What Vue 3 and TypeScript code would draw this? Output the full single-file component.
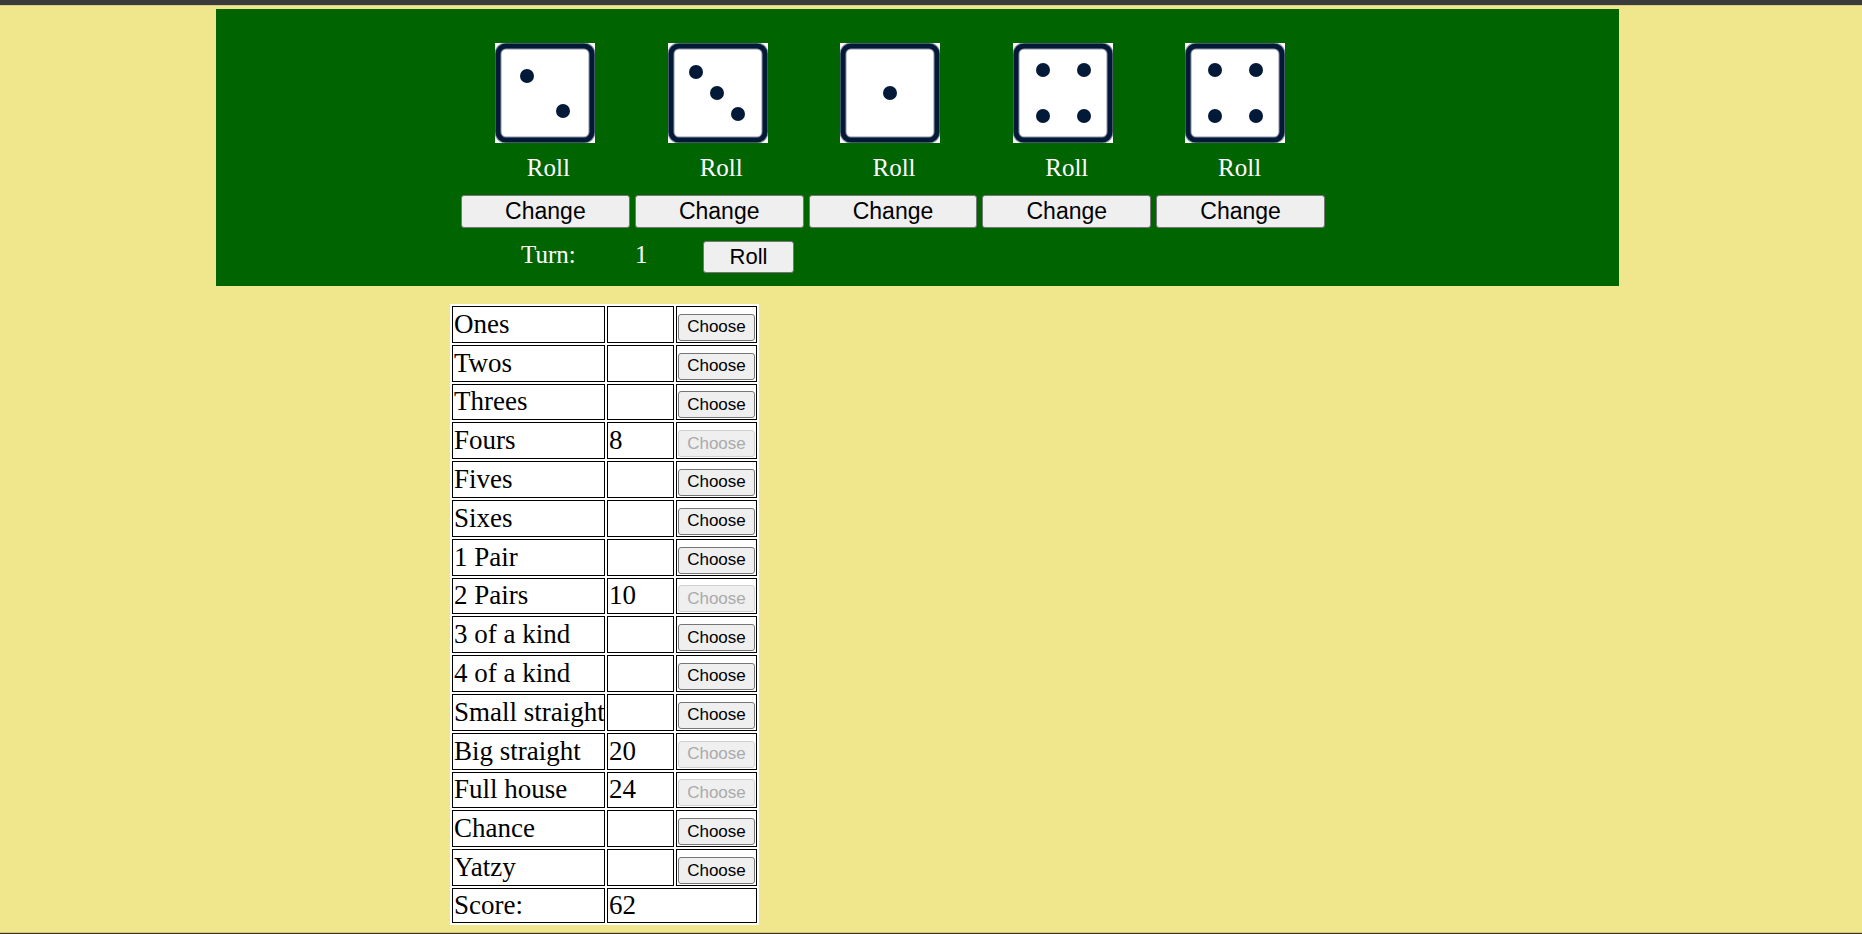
<script setup lang="ts">
import { computed, ref } from 'vue'

interface Category {
  name: string
  points: number | null
}

type Pip = [number, number]

const pips: Record<number, Pip[]> = {
  1: [[50, 50]],
  2: [[32, 33], [68, 68]],
  3: [[28, 29], [49, 50], [70, 71]],
  4: [[30, 27], [71, 27], [30, 73], [71, 73]],
  5: [[30, 27], [71, 27], [50, 50], [30, 73], [71, 73]],
  6: [[30, 25], [71, 25], [30, 50], [71, 50], [30, 75], [71, 75]],
}

const dice = ref<number[]>([2, 3, 1, 4, 4])
const keep = ref<boolean[]>([false, false, false, false, false])
const turn = ref(1)

const categories = ref<Category[]>([
  { name: 'Ones', points: null },
  { name: 'Twos', points: null },
  { name: 'Threes', points: null },
  { name: 'Fours', points: 8 },
  { name: 'Fives', points: null },
  { name: 'Sixes', points: null },
  { name: '1 Pair', points: null },
  { name: '2 Pairs', points: 10 },
  { name: '3 of a kind', points: null },
  { name: '4 of a kind', points: null },
  { name: 'Small straight', points: null },
  { name: 'Big straight', points: 20 },
  { name: 'Full house', points: 24 },
  { name: 'Chance', points: null },
  { name: 'Yatzy', points: null },
])

const score = computed(() => categories.value.reduce((sum, c) => sum + (c.points ?? 0), 0))

function toggle(index: number) {
  keep.value[index] = !keep.value[index]
}

function roll() {
  if (turn.value >= 3) return
  dice.value = dice.value.map((d, i) => (keep.value[i] ? d : 1 + Math.floor(Math.random() * 6)))
  turn.value++
}
</script>

<template>
  <main class="page">
    <section class="board">
      <div class="dice">
        <svg v-for="(value, i) in dice" :key="i" class="die" viewBox="0 0 100 100" role="img" :aria-label="`Die ${value}`">
          <rect width="100" height="100" fill="#fff" />
          <rect x="3" y="3" width="94" height="94" rx="8" fill="#fff" stroke="#8d90a3" stroke-width="7" />
          <rect x="3" y="3" width="94" height="94" rx="8" fill="none" stroke="#021a38" stroke-width="5" />
          <circle v-for="([x, y], p) in pips[value]" :key="p" :cx="x" :cy="y" r="7" fill="#021a38" />
        </svg>
      </div>
      <div class="row labels">
        <span v-for="(kept, i) in keep" :key="i">{{ kept ? 'Keep' : 'Roll' }}</span>
      </div>
      <div class="row changes">
        <button v-for="(_, i) in dice" :key="i" type="button" class="btn" @click="toggle(i)">Change</button>
      </div>
      <div class="turn">
        <span class="turn-label">Turn:</span>
        <span class="turn-value">{{ turn }}</span>
        <button type="button" class="btn roll" @click="roll">Roll</button>
      </div>
    </section>

    <table class="scores">
      <colgroup>
        <col class="name" />
        <col class="points" />
        <col class="action" />
      </colgroup>
      <tbody>
        <tr v-for="c in categories" :key="c.name">
          <td>{{ c.name }}</td>
          <td>{{ c.points }}</td>
          <td>
            <button type="button" class="btn choose" :disabled="c.points !== null">Choose</button>
          </td>
        </tr>
      </tbody>
      <tfoot>
        <tr>
          <td>Score:</td>
          <td colspan="2">{{ score }}</td>
        </tr>
      </tfoot>
    </table>
  </main>
</template>

<style>
body {
  background: #f0e68c;
}
</style>

<style scoped>
.page {
  box-sizing: border-box;
  min-height: 100vh;
  padding-top: 3px;
  border-top: 5px solid #3b3b3b;
  border-bottom: 1px solid #3b3222;
  box-shadow: inset 0 1px #d9cf84, inset 0 -1px #cfc67c;
  font-family: "Liberation Serif", "Times New Roman", serif;
  color: #000;
}

.board {
  box-sizing: border-box;
  margin: 1px 243px 0 216px;
  padding: 34px 0 13px 245px;
  background: #006400;
  color: #fff;
  font-size: 25px;
  line-height: 28px;
}

.dice {
  display: flex;
  justify-content: space-between;
  width: 790px;
  margin-left: 34px;
}

.die {
  display: block;
  width: 100px;
  height: 100px;
}

.row {
  display: grid;
  grid-template-columns: repeat(5, 1fr);
  width: 864px;
}

.labels {
  margin-top: 11px;
  text-align: center;
}

.labels span {
  padding-left: 2px;
}

.changes {
  margin-top: 13px;
  column-gap: 5px;
}

.btn {
  box-sizing: border-box;
  padding: 0;
  border: 1px solid #767676;
  border-radius: 3px;
  background: #efefef;
  color: #000;
  font-family: "Liberation Sans", Arial, sans-serif;
}

.changes .btn {
  height: 33px;
  padding-bottom: 2px;
  font-size: 23px;
  line-height: 28px;
}

.turn {
  display: flex;
  align-items: flex-start;
  margin-top: 13px;
}

.turn-label {
  width: 114px;
  padding-left: 60px;
}

.turn-value {
  width: 68px;
}

.roll {
  width: 91px;
  height: 32px;
  font-size: 22px;
  line-height: 28px;
}

.scores {
  table-layout: fixed;
  width: 309px;
  height: 621px;
  margin: 18px 0 0 450px;
  border-spacing: 2px;
  background: #fff;
  font-size: 27px;
  line-height: 31px;
}

.scores td {
  box-sizing: border-box;
  padding: 1px;
  border: 1px solid #000;
  white-space: nowrap;
}

.scores td:last-child {
  vertical-align: bottom;
}

.scores tfoot td {
  height: 35px;
}

.name {
  width: 153px;
}

.points {
  width: 67px;
}

.action {
  width: 81px;
}

.choose {
  display: block;
  width: 77px;
  height: 27px;
  font-size: 17px;
  line-height: 20px;
}

.choose:disabled {
  border-color: #d0d0d0;
  color: #aaa;
}
</style>
